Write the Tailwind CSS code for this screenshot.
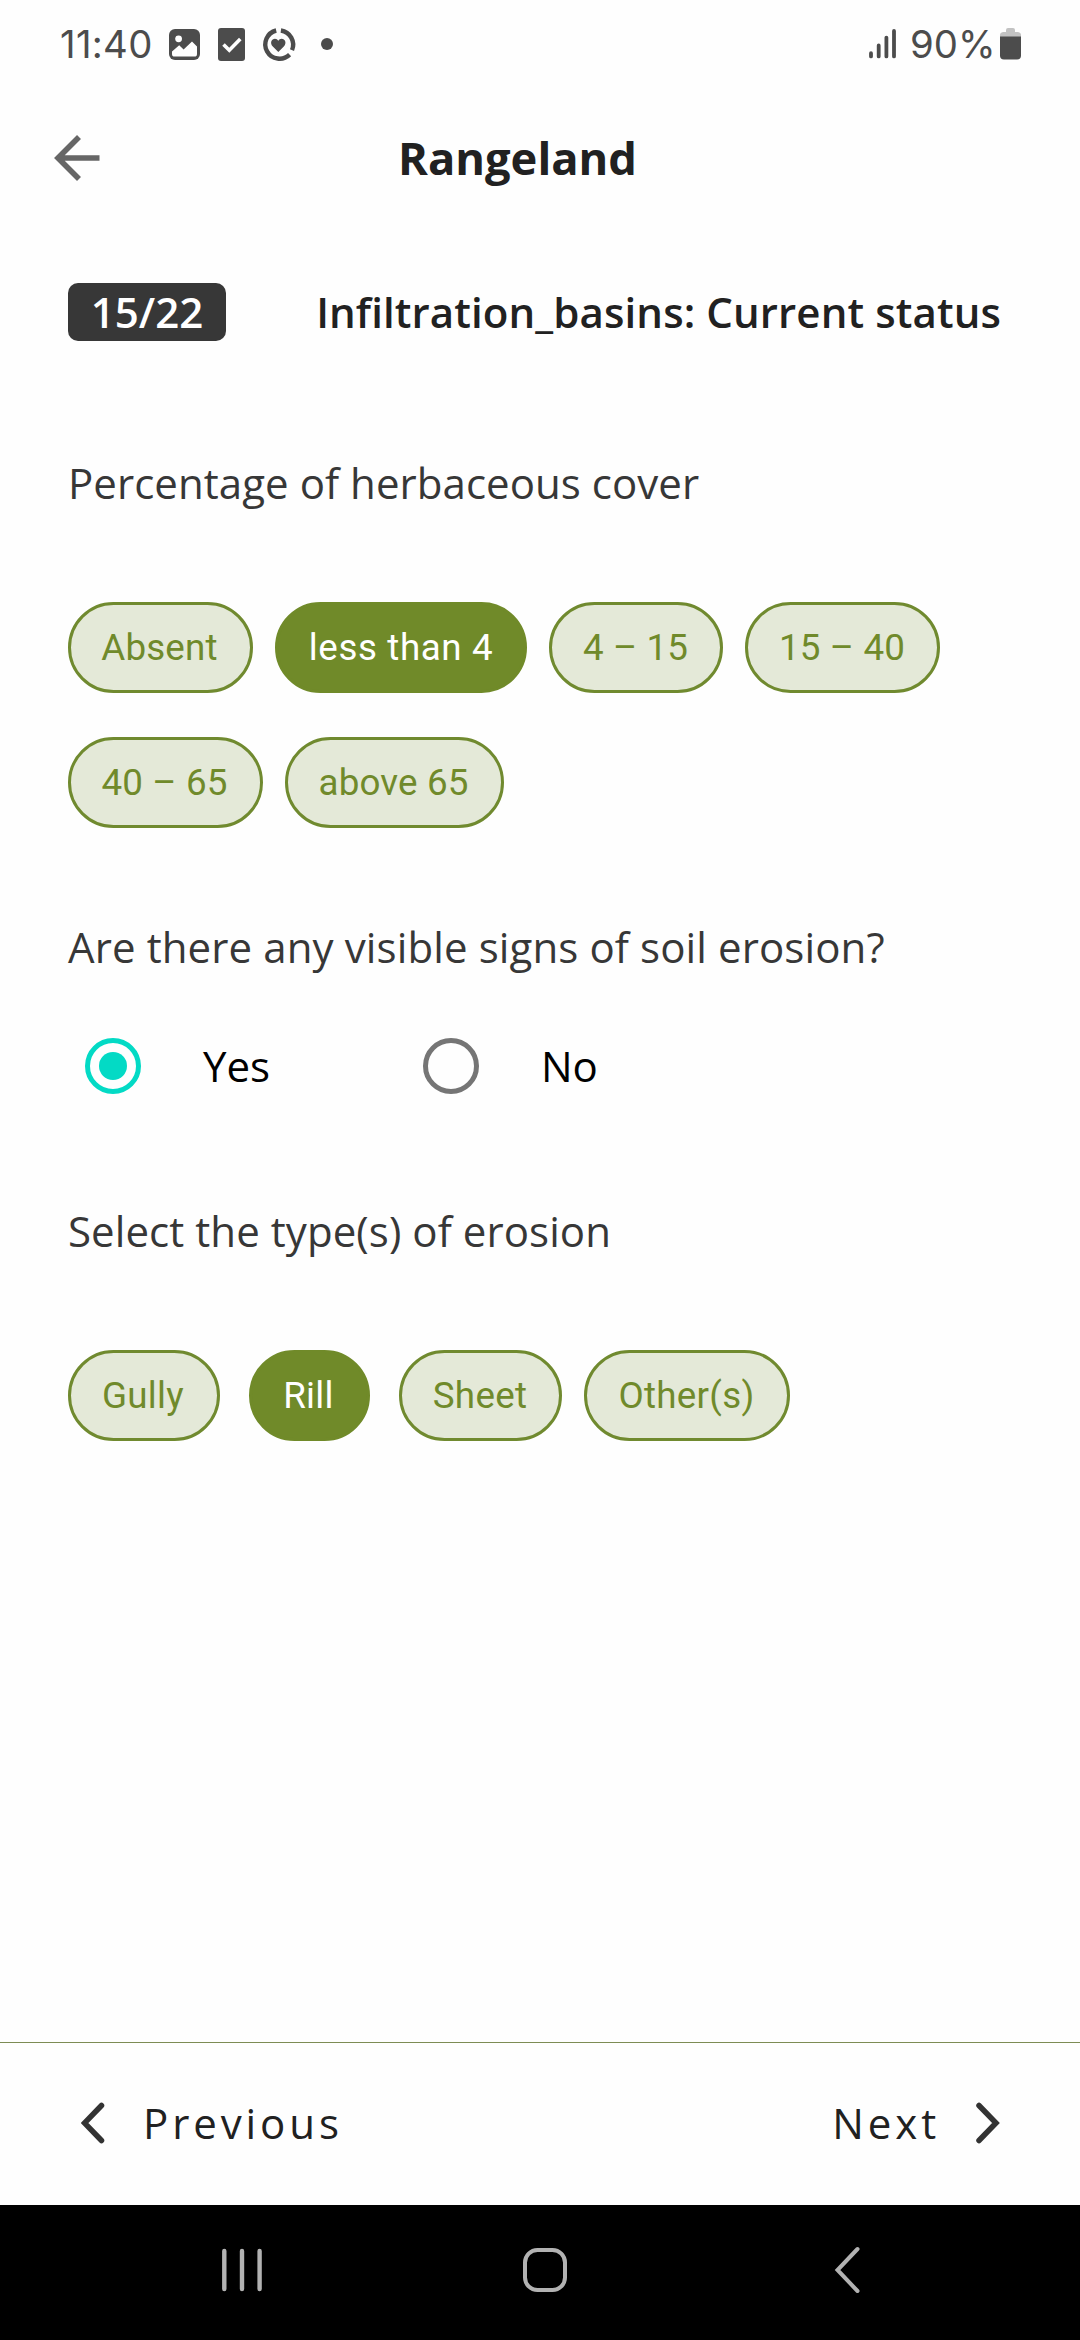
<!DOCTYPE html>
<html lang="en">
<head>
<meta charset="utf-8">
<title>Rangeland</title>
<script src="https://cdn.jsdelivr.net/npm/@tailwindcss/browser@4"></script>
</head>
<body class="bg-[#fefefe]">
<div class="w-[1080px] h-[2340px] flex flex-col overflow-hidden font-['Open_Sans',sans-serif] text-[42px] leading-[60px] text-[#212121] whitespace-nowrap">

  <!-- Status bar -->
  <header class="h-[88px] shrink-0 flex items-center justify-between pl-[60px] pr-[58px] font-['Inter',sans-serif] text-[38.3px] text-[#4c4c4c]">
    <div class="flex items-center">
      <span class="w-[109px] tracking-[0.3px]">11:40</span>
      <svg class="w-[170px] h-[40px]" viewBox="0 0 170 40">
        <rect x="0" y="5" width="31" height="31" rx="6" fill="#4c4c4c"/>
        <circle cx="9.6" cy="14.8" r="3.4" fill="#fefefe"/>
        <path d="M3 27.6 L10.2 21.2 L14.6 25.4 L23 17.4 L28 22.6 V30 Q28 32.6 25.4 32.6 H5.6 Q3 32.6 3 30 Z" fill="#fefefe"/>
        <rect x="49" y="4" width="27" height="33" rx="3" fill="#4c4c4c"/>
        <path d="M54.5 20.5 L60.3 26.3 L71.3 15" fill="none" stroke="#fefefe" stroke-width="3.6"/>
        <g fill="none" stroke="#4c4c4c" stroke-width="4.4">
          <path d="M107.2 6.5 A14.3 14.3 0 1 0 120.6 30.6"/>
          <path d="M111.9 6.5 A14.3 14.3 0 0 1 123 26.2"/>
        </g>
        <path d="M109.3 28 L103.8 22.6 C100.5 19 102.6 14.8 106 14.8 Q108.2 14.8 109.3 16.8 Q110.4 14.8 112.6 14.8 C116 14.8 118.1 19 114.8 22.6 Z" fill="#4c4c4c"/>
        <circle cx="158" cy="20" r="6" fill="#4c4c4c"/>
      </svg>
    </div>
    <div class="flex items-center">
      <svg class="w-[42px] h-[40px]" viewBox="0 0 42 40" stroke="#4c4c4c" stroke-width="3.8" stroke-linecap="round">
        <path d="M3 29.2V32.4M10.7 21.4V32.4M18.4 13.6V32.4M26 7V32.4"/>
      </svg>
      <span class="w-[90px]">90%</span>
      <svg class="w-[22px] h-[40px]" viewBox="0 0 22 40">
        <path d="M6 8 V6 Q6 4 8 4 H13 Q15 4 15 6 V8 H18 Q21 8.500 21 11 V16 H0 V11 Q0 8.500 3 8 Z" fill="#c2c2c2"/>
        <path d="M0 12.500 H21 V31.500 Q21 35.500 17 35.500 H4 Q0 35.500 0 31.500 Z" fill="#4c4c4c"/>
      </svg>
    </div>
  </header>

  <!-- Title bar -->
  <div class="h-[140px] shrink-0 flex items-center pl-[54px]">
    <svg class="w-[46px] h-[46px]" viewBox="0 0 46 46" fill="none" stroke="#666" stroke-width="5.6">
      <path d="M25 2 L4 23 L25 44 M4 23 H45.500"/>
    </svg>
    <h1 class="ml-[298px] text-[45.3px] font-bold">Rangeland</h1>
  </div>

  <!-- Progress and section -->
  <div class="h-[168px] shrink-0 flex items-center justify-between pl-[68px] pr-[79px] font-semibold">
    <span class="w-[158px] h-[58px] rounded-[10px] bg-[#373737] text-white text-center leading-[58px]">15/22</span>
    <h2 class="tracking-[0.11px]">Infiltration_basins: Current status</h2>
  </div>

  <main class="flex-1 pl-[68px] text-[#373737]">
    <p class="mt-[57px] tracking-[0.05px]">Percentage of herbaceous cover</p>
    <div class="mt-[89px] flex flex-wrap gap-x-[22px] gap-y-[44px] w-[940px] font-['Roboto',sans-serif] text-[36.75px] leading-[85px] text-center text-[#708a2b] tracking-[0.15px]">
      <span class="w-[185px] h-[91px] pr-[2px] rounded-full border-3 border-[#708a2f] bg-[#e4e9d8]">Absent</span>
      <span class="w-[252px] h-[91px] rounded-full border-3 border-[#708a29] bg-[#708a29] text-white tracking-[0.6px]">less than 4</span>
      <span class="w-[174px] h-[91px] pr-[1px] rounded-full border-3 border-[#708a2f] bg-[#e4e9d8]">4 – 15</span>
      <span class="w-[195px] h-[91px] pr-[1px] rounded-full border-3 border-[#708a2f] bg-[#e4e9d8]">15 – 40</span>
      <span class="w-[195px] h-[91px] pr-[2px] rounded-full border-3 border-[#708a2f] bg-[#e4e9d8]">40 – 65</span>
      <span class="w-[219px] h-[91px] pr-[2px] rounded-full border-3 border-[#708a2f] bg-[#e4e9d8]">above 65</span>
    </div>

    <p class="mt-[89px] tracking-[0.11px]">Are there any visible signs of soil erosion?</p>
    <div class="mt-[61px] h-[56px] flex items-center pl-[17px] text-black">
      <div class="flex items-center w-[338px]">
        <span class="size-[56px] rounded-full border-[5.5px] border-[#03dac5] flex items-center justify-center"><span class="size-[28px] rounded-full bg-[#03dac5]"></span></span>
        <span class="ml-[62px]">Yes</span>
      </div>
      <div class="flex items-center">
        <span class="size-[56px] rounded-full border-[5.5px] border-[#757575]"></span>
        <span class="ml-[62px]">No</span>
      </div>
    </div>

    <p class="mt-[107px] tracking-[0.07px]">Select the type(s) of erosion</p>
    <div class="mt-[89px] flex gap-[22px] font-['Roboto',sans-serif] text-[36.75px] leading-[85px] text-center text-[#708a2b] tracking-[0.3px]">
      <span class="w-[152px] h-[91px] pr-[2px] rounded-full border-3 border-[#708a2f] bg-[#e4e9d8]">Gully</span>
      <span class="mx-[7px] w-[121px] h-[91px] pr-[2px] rounded-full border-3 border-[#708a29] bg-[#708a29] text-white">Rill</span>
      <span class="w-[163px] h-[91px] pr-[1px] rounded-full border-3 border-[#708a2f] bg-[#e4e9d8]">Sheet</span>
      <span class="w-[206px] h-[91px] pr-[1px] rounded-full border-3 border-[#708a2f] bg-[#e4e9d8]">Other(s)</span>
    </div>
  </main>

  <!-- Pager -->
  <footer class="h-[163px] shrink-0 border-t border-[#7d8c54] pb-[2px] pl-[81px] pr-[80px] flex items-center justify-between tracking-[3.9px]">
    <div class="flex items-center">
      <svg class="w-[24px] h-[42px]" viewBox="0 0 24 42" fill="none" stroke="#333" stroke-width="5.5" stroke-linecap="round"><path d="M20.500 3.500 L3.500 21 L20.500 38.500"/></svg>
      <span class="ml-[38px]">Previous</span>
    </div>
    <div class="flex items-center">
      <span class="mr-[36px]">Next</span>
      <svg class="w-[24px] h-[42px]" viewBox="0 0 24 42" fill="none" stroke="#333" stroke-width="5.5" stroke-linecap="round"><path d="M3 3.500 L20 21 L3 38.500"/></svg>
    </div>
  </footer>

  <!-- System navigation -->
  <nav class="h-[135px] shrink-0 bg-black pb-[5px] pl-[220px] pr-[218px] flex items-center justify-between">
    <svg class="w-[44px] h-[48px]" viewBox="0 0 44 48" stroke="#b2b2b2" stroke-width="4.4" stroke-linecap="round"><path d="M4.300 5V43M22 5V43M39.600 5V43"/></svg>
    <svg class="w-[48px] h-[48px] mr-[8px]" viewBox="0 0 48 48" fill="none" stroke="#b2b2b2" stroke-width="4"><rect x="4" y="4" width="40" height="40" rx="12.500"/></svg>
    <svg class="w-[28px] h-[48px]" viewBox="0 0 28 48" fill="none" stroke="#b2b2b2" stroke-width="4" stroke-linecap="round"><path d="M23.500 3 L3.500 24 L23.500 45"/></svg>
  </nav>
</div>
</body>
</html>
